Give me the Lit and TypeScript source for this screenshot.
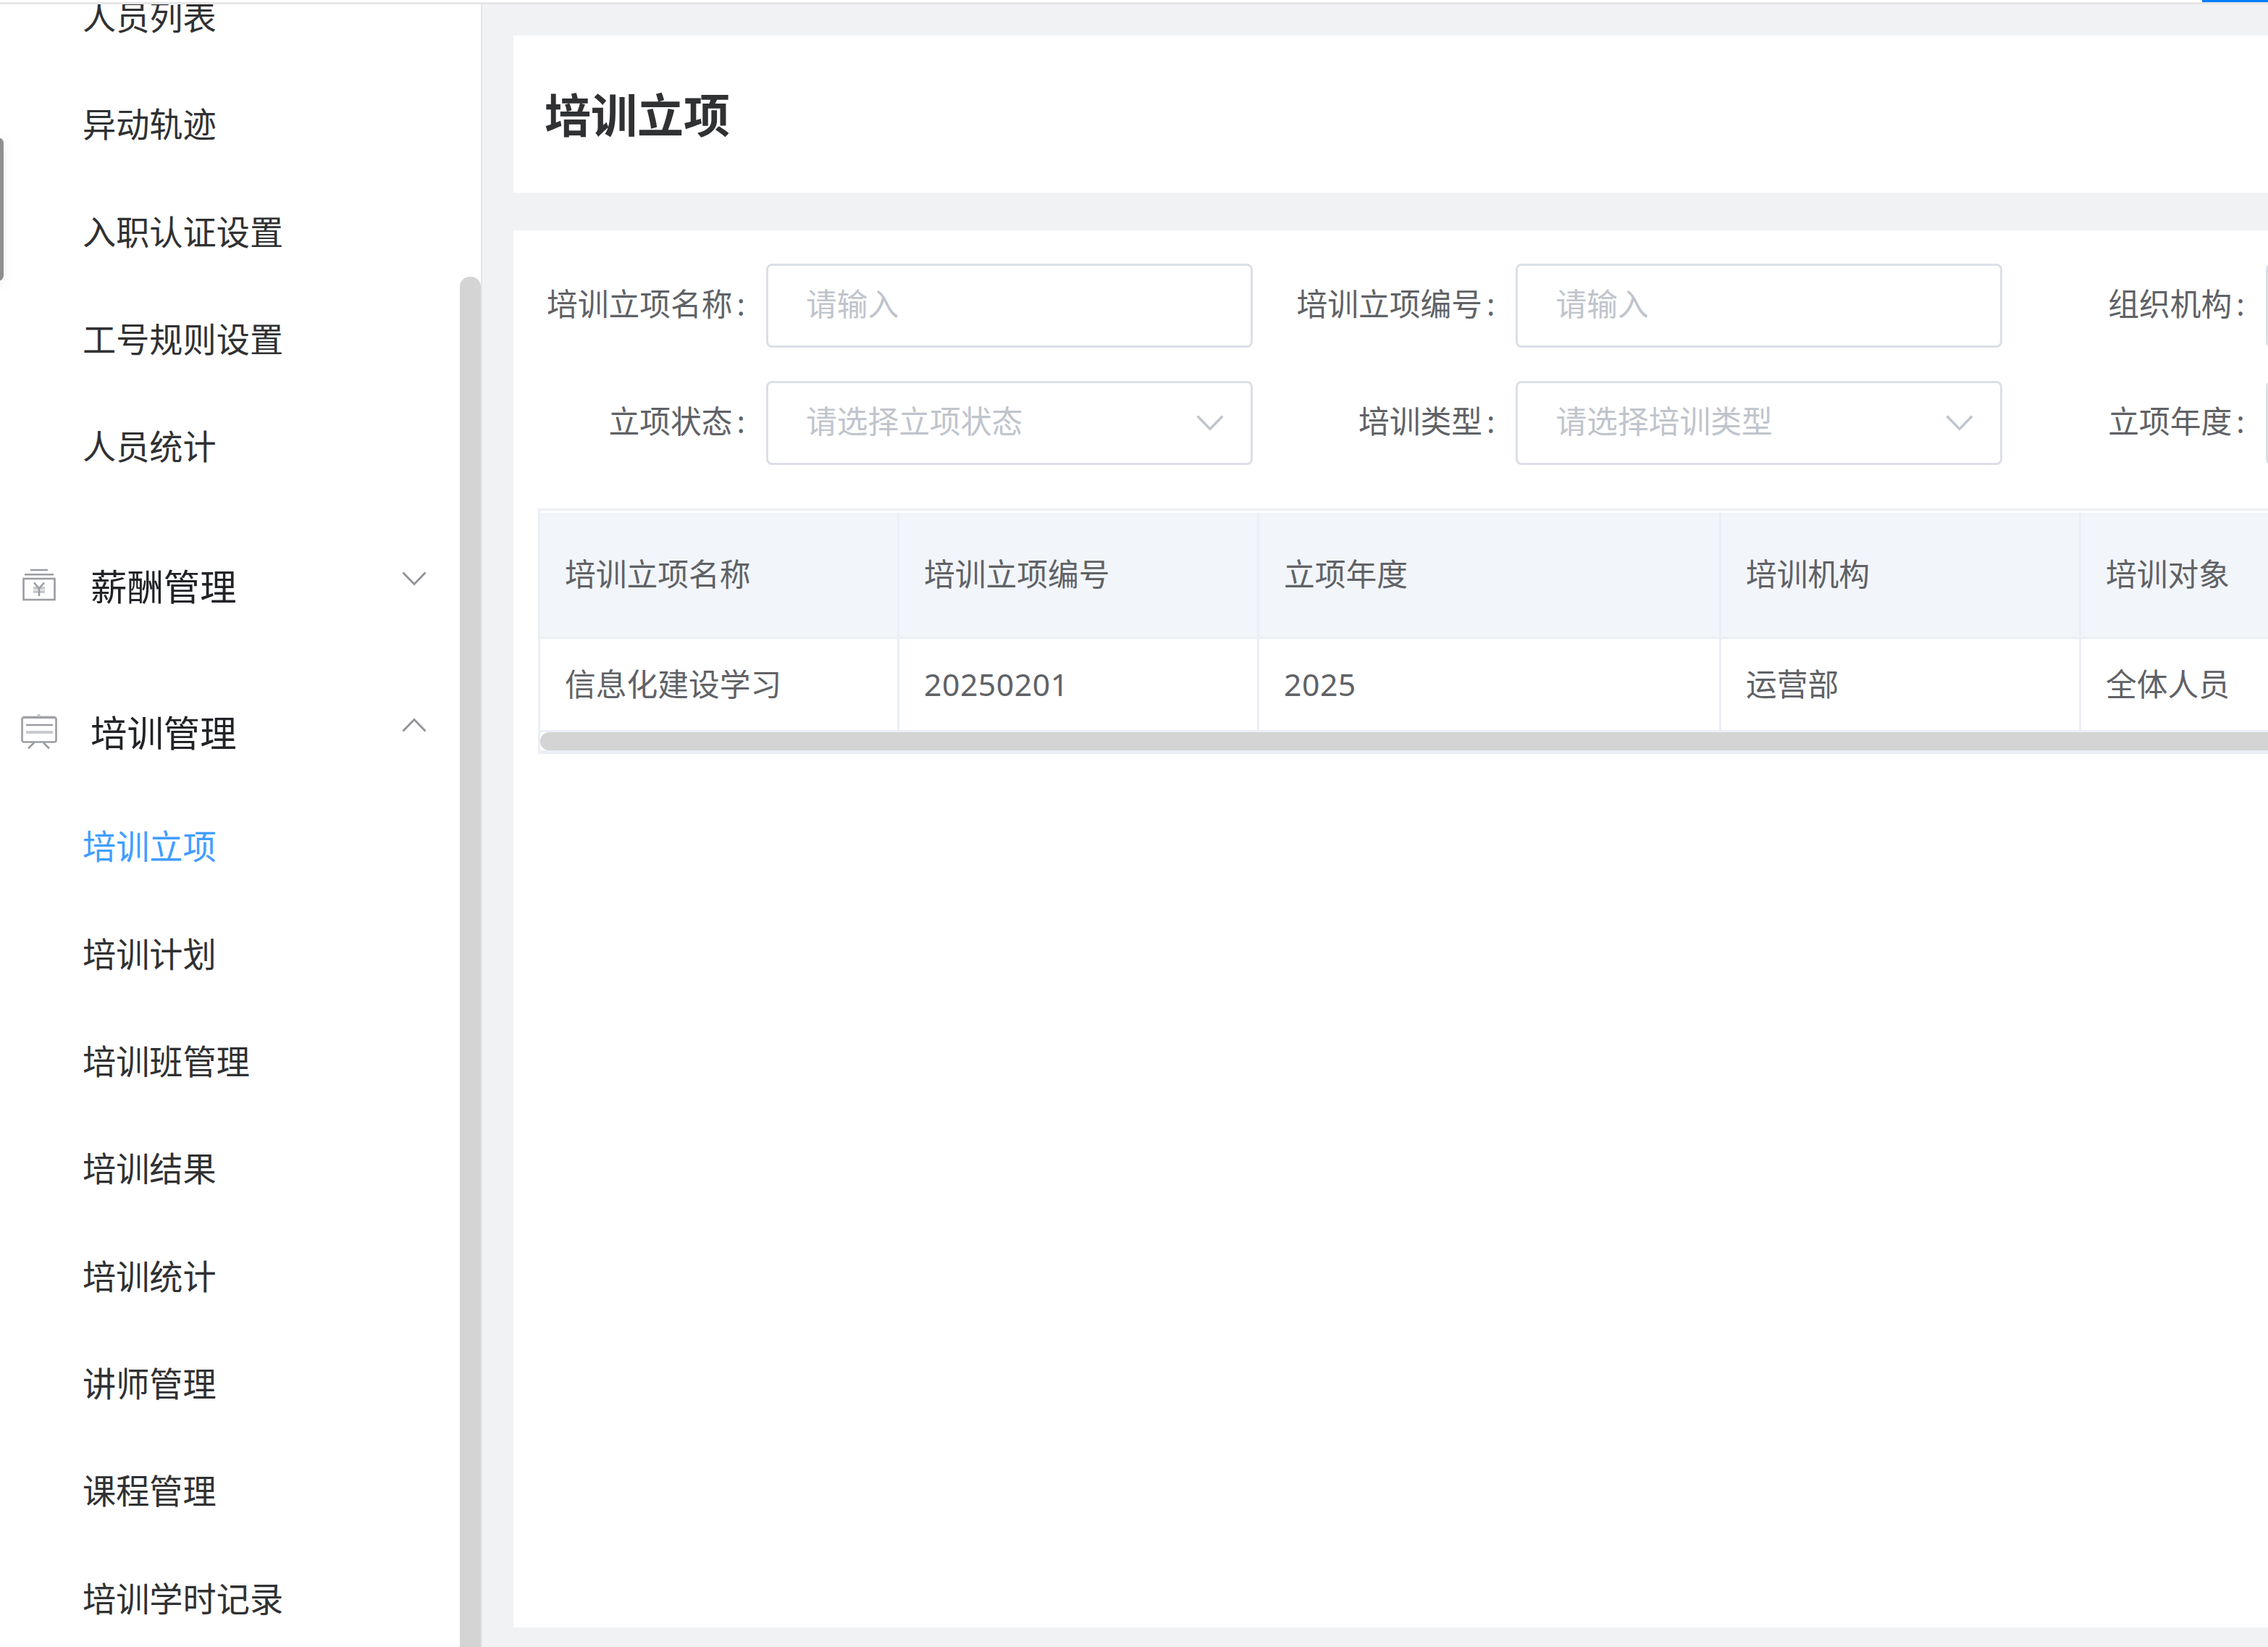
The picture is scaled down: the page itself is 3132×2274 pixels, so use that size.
import { LitElement, html, css, svg, nothing } from "lit";
import { customElement } from "lit/decorators.js";
import { classMap } from "lit/directives/class-map.js";

interface MenuGroup {
  title?: string;
  icon?: "salary" | "training";
  open: boolean;
  items: string[];
}

const MENU: MenuGroup[] = [
  { open: true, items: ["人员列表", "异动轨迹", "入职认证设置", "工号规则设置", "人员统计"] },
  { title: "薪酬管理", icon: "salary", open: false, items: [] },
  {
    title: "培训管理",
    icon: "training",
    open: true,
    items: ["培训立项", "培训计划", "培训班管理", "培训结果", "培训统计", "讲师管理", "课程管理", "培训学时记录"],
  },
];

const ACTIVE = "培训立项";

const FIELDS = [
  { label: "培训立项名称", placeholder: "请输入", select: false },
  { label: "培训立项编号", placeholder: "请输入", select: false },
  { label: "组织机构", placeholder: "", select: false },
  { label: "立项状态", placeholder: "请选择立项状态", select: true },
  { label: "培训类型", placeholder: "请选择培训类型", select: true },
  { label: "立项年度", placeholder: "", select: false },
];

const COLUMNS = ["培训立项名称", "培训立项编号", "立项年度", "培训机构", "培训对象"];
const ROWS = [["信息化建设学习", "20250201", "2025", "运营部", "全体人员"]];

const ICONS = {
  salary: svg`
    <path d="M13 3h24M5 9.200h40" />
    <rect x="3.500" y="15" width="43" height="29" />
    <path class="soft" d="M17 28h16M17 33h16" />
    <path d="M18 20.500l7 8 7-8M25 28v11" />`,
  training: svg`
    <path class="soft" d="M24.500 0v4M3 4.500h44M7 25h37" />
    <rect x="1.500" y="4.500" width="47" height="34" rx="2.500" />
    <path d="M7 15h37M18 39.500l-8 8M31 39.500l8 8" />`,
};

@customElement("app-root")
export class AppRoot extends LitElement {
  static styles = css`
    :host {
      display: block;
      width: 3132px;
      height: 2274px;
      overflow: hidden;
      position: relative;
      background: #f1f2f4;
      color: #606266;
      font: 42.75px/60px "Noto Sans", "Noto Sans CJK SC", sans-serif;
      white-space: nowrap;
    }
    * {
      box-sizing: border-box;
    }
    .page {
      display: flex;
      flex-direction: column;
      height: 2274px;
    }
    .topline {
      flex: none;
      display: flex;
      justify-content: flex-end;
      height: 6px;
      background: #fff;
      border-bottom: 3px solid #e6e6e6;
    }
    .accent {
      width: 91px;
      height: 3px;
      background: #007dff;
    }
    .body {
      flex: 1;
      min-height: 0;
      display: flex;
    }
    .sidebar {
      flex: none;
      width: 666px;
      display: flex;
      background: #fff;
      border-right: 2px solid #e6e6e6;
      overflow: hidden;
    }
    .menu {
      flex: 1;
      margin-top: -57px;
    }
    .track {
      flex: none;
      width: 29px;
      padding-top: 376px;
    }
    .thumb {
      height: 1960px;
      background: #d4d4d4;
      border-radius: 14px;
    }
    .item {
      height: 148.3px;
      line-height: 150.3px;
      padding-left: 114px;
      font-size: 46.2px;
      color: #303133;
    }
    .item.active {
      color: #409eff;
    }
    .group-title {
      margin-top: 37px;
      height: 165px;
      display: flex;
      align-items: center;
      padding: 0 45px 0 29px;
      font-size: 50.4px;
      color: #212327;
    }
    .group-icon {
      width: 50px;
      height: 48px;
      margin: 0 46px 4px 0;
      fill: none;
      stroke: #9a9da3;
      stroke-width: 2.6;
    }
    .group-icon .soft {
      stroke: #c8cacd;
      stroke-width: 4;
    }
    .group-name {
      flex: 1;
    }
    .chevron {
      fill: none;
      stroke: #909399;
      stroke-width: 2.8;
    }
    .group-title .chevron {
      width: 34px;
      height: 20px;
      margin: 0 1px 21px 0;
    }
    .chevron.up {
      transform: rotate(180deg);
    }
    .main {
      flex: 1;
      min-width: 0;
      padding: 43px 0 27px 43px;
      display: flex;
      flex-direction: column;
      gap: 52px;
    }
    .card {
      background: #fff;
      overflow: hidden;
    }
    .heading {
      flex: none;
      height: 217px;
      padding: 2px 0 0 43px;
      display: flex;
      align-items: center;
    }
    .title {
      margin: 0;
      font-size: 64px;
      line-height: 90px;
      font-weight: 700;
      color: #303133;
    }
    .content {
      flex: 1;
      padding: 46px 0 0 34px;
    }
    .filters {
      display: grid;
      grid-template-columns: repeat(3, 1035.4px);
      row-gap: 46px;
    }
    .field {
      display: flex;
      align-items: center;
      height: 116px;
    }
    .label {
      width: 286px;
      margin-right: 29px;
      padding-bottom: 5px;
      text-align: right;
    }
    .colon {
      margin-left: 6px;
    }
    .control {
      width: 672px;
      height: 116px;
      padding: 0 37px 0 52px;
      border: 3px solid #dcdfe6;
      border-radius: 8px;
      display: flex;
      align-items: center;
      justify-content: space-between;
      color: #c0c4cc;
    }
    .placeholder {
      padding-bottom: 5px;
    }
    .control .chevron {
      width: 38px;
      height: 24px;
      stroke: #c0c4cc;
      stroke-width: 3;
    }
    .table {
      margin-top: 60px;
      width: 2500px;
      border: 3px solid #ebeef5;
      border-bottom-width: 5px;
      border-right: 0;
    }
    .row {
      display: grid;
      grid-template-columns: 496px 497px 638px 497px 497px;
    }
    .cell {
      padding-left: 34px;
      border-right: 3px solid #ebeef5;
      border-bottom: 3px solid #ebeef5;
      height: 129px;
      line-height: 126px;
    }
    .cell.numeric {
      letter-spacing: 0.5px;
    }
    .head {
      margin-top: 3px;
      background: #f2f5fa;
    }
    .head .cell {
      height: 174px;
      line-height: 169px;
    }
    .hscroll {
      height: 25px;
      background: #d4d4d4;
      border-radius: 12px 0 0 12px;
    }
    .handle {
      position: absolute;
      left: -10px;
      top: 190px;
      width: 15px;
      height: 198px;
      border-radius: 8px;
      background: #8f8f8f;
      box-shadow: 0 4px 16px rgba(60, 90, 160, 0.1);
    }
  `;

  private chevron(up = false) {
    return html`<svg class=${classMap({ chevron: true, up })} viewBox="0 0 34 20">
      <path d="M1.500 1.500L17 17.500L32.500 1.500" />
    </svg>`;
  }

  private group(g: MenuGroup) {
    return html`
      ${g.title
        ? html`<div class="group-title">
            <svg class="group-icon" viewBox="0 0 50 48">${ICONS[g.icon!]}</svg>
            <span class="group-name">${g.title}</span>
            ${this.chevron(g.open)}
          </div>`
        : nothing}
      ${g.items.map((t) => html`<div class=${classMap({ item: true, active: t === ACTIVE })}>${t}</div>`)}
    `;
  }

  private cell(text: string) {
    return html`<div class=${classMap({ cell: true, numeric: /^\d+$/.test(text) })}>${text}</div>`;
  }

  render() {
    return html`
      <div class="page">
        <div class="topline"><div class="accent"></div></div>
        <div class="body">
          <nav class="sidebar">
            <div class="menu">${MENU.map((g) => this.group(g))}</div>
            <div class="track"><div class="thumb"></div></div>
          </nav>
          <main class="main">
            <header class="card heading"><h1 class="title">培训立项</h1></header>
            <section class="card content">
              <div class="filters">
                ${FIELDS.map(
                  (f) => html`<div class="field">
                    <span class="label">${f.label}<span class="colon">:</span></span>
                    <div class="control">
                      <span class="placeholder">${f.placeholder}</span>${f.select ? this.chevron() : nothing}
                    </div>
                  </div>`
                )}
              </div>
              <div class="table">
                <div class="row head">${COLUMNS.map((c) => this.cell(c))}</div>
                ${ROWS.map((r) => html`<div class="row">${r.map((c) => this.cell(c))}</div>`)}
                <div class="hscroll"></div>
              </div>
            </section>
          </main>
        </div>
      </div>
      <div class="handle"></div>
    `;
  }
}
